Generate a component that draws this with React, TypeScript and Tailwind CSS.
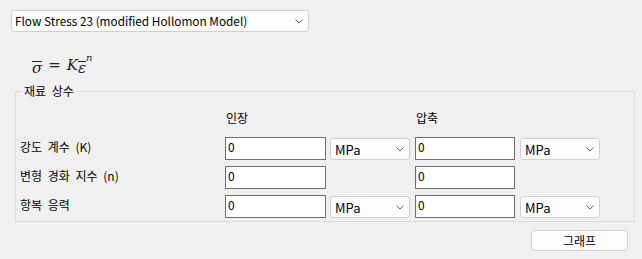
import React from "react";

const Chevron = () => (
  <svg width="8" height="5" viewBox="0 0 8 5" className="block">
    <path d="M0.5 0.5 L4 4 L7.5 0.5" fill="none" stroke="#606060" strokeWidth="1" />
  </svg>
);

function Combo({ label, className }: { label: string; className: string }) {
  return (
    <div
      className={
        "flex items-center justify-between rounded-[3px] border border-[#d0d0d0] bg-[#fdfdfd] pr-[5px] " +
        className
      }
    >
      <span className="leading-none">{label}</span>
      <Chevron />
    </div>
  );
}

function Field({ className }: { className: string }) {
  return (
    <div className={"border border-[#6e6e6e] bg-white pl-[2px] pt-[3px] leading-none " + className}>0</div>
  );
}

export default function App() {
  return (
    <div className="w-[642px] h-[259px] overflow-hidden bg-[#f0f0f0] text-[12px] text-black [word-spacing:3px] font-['Noto_Sans_CJK_KR',sans-serif]">
      <div className="pt-[10px] pl-[11px]">
        <Combo
          label="Flow Stress 23 (modified Hollomon Model)"
          className="w-[298px] h-[22px] pl-[3px] text-[11.8px] [word-spacing:0px]"
        />
      </div>
      <div className="pl-[32px] mt-[21px] h-[20px] flex items-end font-['DejaVu_Serif',serif] text-[15px] italic leading-none text-[#222] [word-spacing:0px]">
        <span className="border-t border-[#222] pt-[1px] leading-[10px]">σ</span>
        <span className="not-italic mx-[6px]">=</span>
        <span>K</span>
        <span className="border-t border-[#222] pt-[1px] leading-[10px]">ε</span>
        <span className="text-[10px] self-start">n</span>
      </div>
      <fieldset className="ml-[15px] mt-[10px] w-[620px] h-[139px] border border-[#dcdcdc]">
        <legend className="ml-[5px] px-[3px] leading-[16px]">재료 상수</legend>
        <div className="flex pl-[210px] pt-[10px] h-[38px]">
          <span className="w-[190px]">인장</span>
          <span>압축</span>
        </div>
        <div className="flex flex-col gap-[6px]">
          <div className="flex h-[23px]">
            <span className="w-[209px] pl-[4px] pt-[1px]">강도 계수 (K)</span>
            <Field className="w-[101px] h-[23px]" />
            <Combo label="MPa" className="ml-[4px] mt-[1px] w-[80px] h-[22px] pl-[4px] text-[13px]" />
            <Field className="ml-[5px] w-[100px] h-[23px]" />
            <Combo label="MPa" className="ml-[5px] mt-[1px] w-[80px] h-[22px] pl-[4px] text-[13px]" />
          </div>
          <div className="flex h-[23px]">
            <span className="w-[209px] pl-[4px] pt-[1px]">변형 경화 지수 (n)</span>
            <Field className="w-[101px] h-[23px]" />
            <div className="ml-[4px] w-[80px]" />
            <Field className="ml-[5px] w-[100px] h-[23px]" />
          </div>
          <div className="flex h-[23px]">
            <span className="w-[209px] pl-[4px] pt-[1px]">항복 응력</span>
            <Field className="w-[101px] h-[23px]" />
            <Combo label="MPa" className="ml-[4px] mt-[1px] w-[80px] h-[22px] pl-[4px] text-[13px]" />
            <Field className="ml-[5px] w-[100px] h-[23px]" />
            <Combo label="MPa" className="ml-[5px] mt-[1px] w-[80px] h-[22px] pl-[4px] text-[13px]" />
          </div>
        </div>
      </fieldset>
      <div className="flex justify-end pr-[14px] mt-[8px]">
        <button className="w-[97px] h-[21px] rounded-[4px] border border-[#d0d0d0] bg-[#fdfdfd] text-[12px] leading-none">
          그래프
        </button>
      </div>
    </div>
  );
}
